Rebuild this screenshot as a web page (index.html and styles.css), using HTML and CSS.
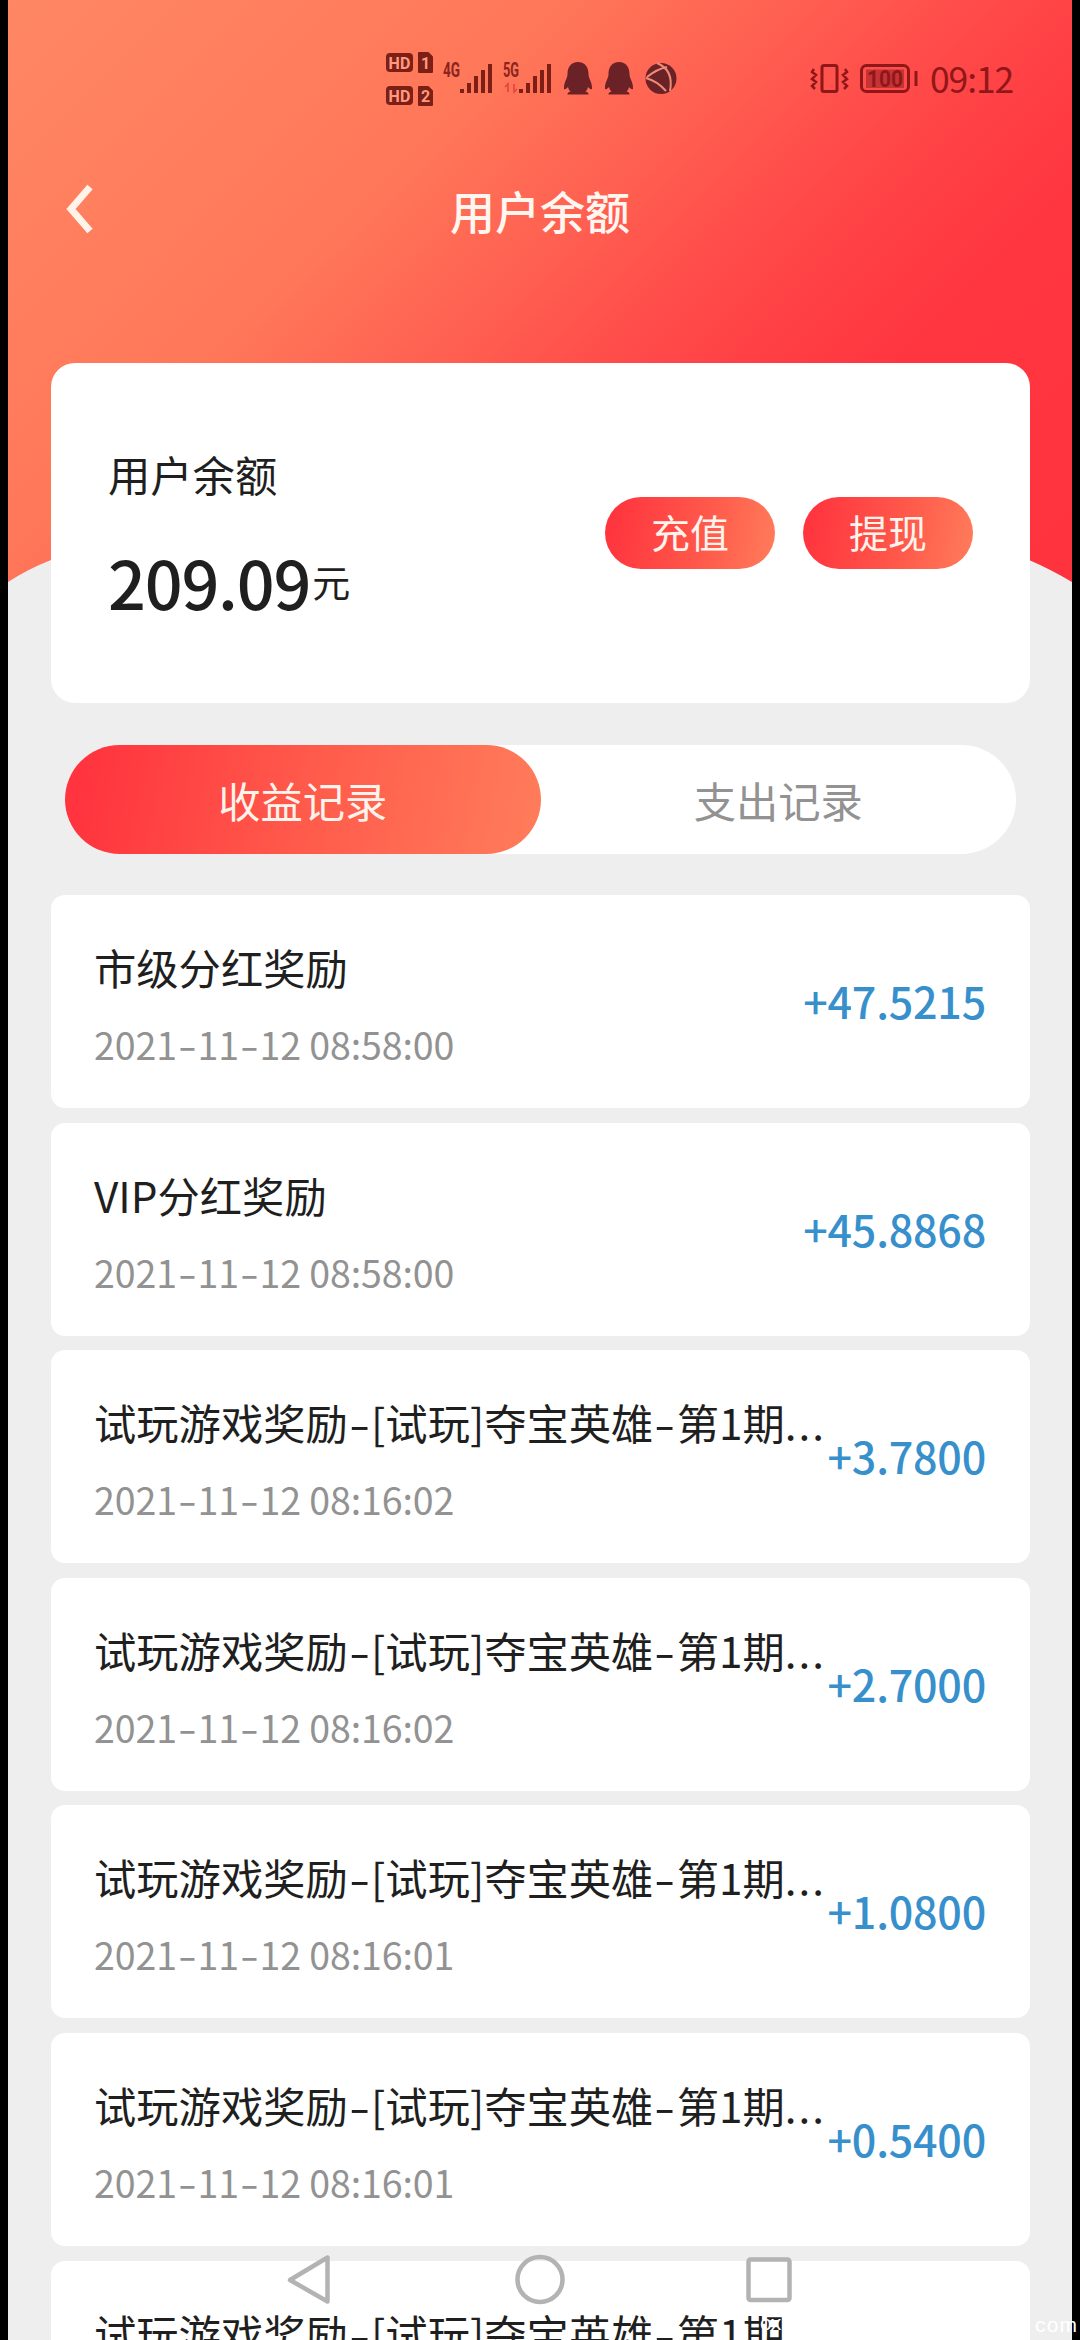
FILE: index.html
```html
<!DOCTYPE html>
<html lang="zh-CN">
<head>
<meta charset="utf-8">
<title>用户余额</title>
<link rel="stylesheet" href="styles.css">
</head>
<body>
<div class="screen">
  <div class="header-bg"></div>
  <header class="status">
    <svg class="status-icons" width="310" height="64" viewBox="380 46 310 64">
      <g fill="#7c1f17">
        <rect x="386" y="53" width="27" height="19" rx="4"/><path d="M419 53h9l4 4v15h-13z" stroke="#7c1f17" stroke-width="2" stroke-linejoin="round"/>
        <rect x="386" y="86" width="27" height="19" rx="4"/><path d="M419 87h9l4 4v14h-13z" stroke="#7c1f17" stroke-width="2" stroke-linejoin="round"/>
        <path d="M460 89h4v4h-4zM467 83h4v10h-4zM474 76h4v17h-4zM481 70h4v23h-4zM488 64h4v29h-4zM519 89h4v4h-4zM526 83h4v10h-4zM533 76h4v17h-4zM540 70h4v23h-4zM547 64h4v29h-4z"/>
      </g>
      <g class="hd"><text x="388.500" y="68.500" textLength="22">HD</text><text x="421" y="69">1</text><text x="388.500" y="101.500" textLength="22">HD</text><text x="421" y="102">2</text></g>
      <g class="net"><text x="443" y="77" textLength="17" lengthAdjust="spacingAndGlyphs">4G</text><text x="503" y="77" textLength="16" lengthAdjust="spacingAndGlyphs">5G</text></g>
      <path d="M508 92v-8l-3 3M514 84v8l3-3" fill="none" stroke="#e2453c" stroke-width="1.600"/>
      <g id="qq" fill="#6b2226"><path d="M578 62c-7 0-10.500 5-10.500 12 0 5-4 8-3.500 15 1 1 3-1 4-2 .5 2 1 3 2.500 4.500-2 .5-3 1-3 3h21c0-2-1-2.500-3-3 1.500-1.500 2-2.500 2.500-4.500 1 1 3 3 4 2 .5-7-3.500-10-3.500-15 0-7-3.500-12-10.500-12z"/></g>
      <use href="#qq" x="41"/>
      <circle cx="661" cy="78.500" r="15.500" fill="#6b2226"/>
      <path d="M647 77q10-8 20-10M646 78q11 3 20 13M657 63q17 7 13 28" fill="none" stroke="#ef8a78" stroke-width="2"/>
    </svg>
    <svg class="status-right" width="110" height="36" viewBox="809 60 110 36">
      <g fill="none" stroke="#8f1719" stroke-width="3">
        <rect x="822" y="65.500" width="15" height="26" rx="2"/>
        <path d="M814 69l-2 3 4 3-4 4 4 3-4 4 3 3M845 69l2 3-4 3 4 4-4 3 4 4-3 3" stroke-width="2.500"/>
        <rect x="861.500" y="65.500" width="47" height="26" rx="5"/>
        <path d="M916 71v15"/>
      </g>
      <rect x="866" y="69.500" width="38" height="18.500" fill="#c53337"/>
      <text class="bat" x="867" y="87" textLength="36" lengthAdjust="spacingAndGlyphs">100</text>
    </svg>
    <span class="clock">09:12</span>
  </header>
  <div class="navbar">
    <svg class="back" width="32" height="52" viewBox="0 0 32 52"><path d="M26 4L7 26l19 22" fill="none" stroke="#fff3ea" stroke-width="7"/></svg>
    <h1>用户余额</h1>
  </div>
  <section class="balance">
    <div class="info">
      <div class="label">用户余额</div>
      <div class="amount"><b>209.09</b><span>元</span></div>
    </div>
    <div class="buttons"><button>充值</button><button>提现</button></div>
  </section>
  <div class="tabs"><div class="tab active">收益记录</div><div class="tab">支出记录</div></div>
  <main class="list">
    <article><div class="text"><h2>市级分红奖励</h2><time>2021<i>-</i>11<i>-</i>12 08:58:00</time></div><strong>+47.5215</strong></article>
    <article><div class="text"><h2>VIP分红奖励</h2><time>2021<i>-</i>11<i>-</i>12 08:58:00</time></div><strong>+45.8868</strong></article>
    <article><div class="text"><h2>试玩游戏奖励<i>-</i>[试玩]夺宝英雄<i>-</i>第1期<em>...</em></h2><time>2021<i>-</i>11<i>-</i>12 08:16:02</time></div><strong>+3.7800</strong></article>
    <article><div class="text"><h2>试玩游戏奖励<i>-</i>[试玩]夺宝英雄<i>-</i>第1期<em>...</em></h2><time>2021<i>-</i>11<i>-</i>12 08:16:02</time></div><strong>+2.7000</strong></article>
    <article><div class="text"><h2>试玩游戏奖励<i>-</i>[试玩]夺宝英雄<i>-</i>第1期<em>...</em></h2><time>2021<i>-</i>11<i>-</i>12 08:16:01</time></div><strong>+1.0800</strong></article>
    <article><div class="text"><h2>试玩游戏奖励<i>-</i>[试玩]夺宝英雄<i>-</i>第1期<em>...</em></h2><time>2021<i>-</i>11<i>-</i>12 08:16:01</time></div><strong>+0.5400</strong></article>
    <article><div class="text"><h2>试玩游戏奖励<i>-</i>[试玩]夺宝英雄<i>-</i>第1期</h2></div></article>
  </main>
  <nav class="sysnav">
    <svg width="520" height="60" viewBox="280 2250 520 60" fill="none" stroke="#b3b3b3" stroke-width="4.500" stroke-linejoin="round">
      <path d="M327.500 2257.500v44L290 2280z"/><circle cx="540" cy="2279.500" r="22.500"/><rect x="748.500" y="2259.500" width="41" height="40.500" rx="2"/>
    </svg>
  </nav>
  <span class="mark mark-start">ox</span>
  <span class="mark">com</span>
</div>
</body>
</html>
```
FILE: styles.css
```css
* { box-sizing: border-box; margin: 0; padding: 0; }
body {
  width: 1080px; height: 2340px; overflow: hidden; background: #000;
  font-family: "Noto Sans CJK SC", sans-serif; color: #1f1f1f;
}
.screen { position: relative; width: 1064px; height: 2340px; margin: 0 8px; background: #eeeeef; }
.header-bg {
  position: absolute; inset: 0 0 auto 0; height: 583px;
  background: linear-gradient(135deg, #ff8764 0%, #ff7759 34%, #ff6051 48%, #ff4f4b 57%, #ff4044 67%, #ff353f 77%, #ff333e 100%);
  clip-path: path("M0 0H1064V582Q1042 569 1021 560H43Q20 569 0 582Z");
}
.status { position: relative; display: flex; height: 156px; padding: 46px 0 0 372px; }
.status-right { margin: 14px 0 0 119px; flex: none; }
.status-icons { flex: none; }
.hd text { font: bold 16px Roboto, sans-serif; fill: #ff9a80; }
.net text { font: bold 20px Roboto, sans-serif; fill: #8a241c; }
.bat { font: bold 24px Roboto, sans-serif; fill: #8f1719; }
.clock { margin-left: 11px; font-size: 35.500px; line-height: 64px; letter-spacing: -1.100px; color: #8f1719; white-space: nowrap; }
.navbar { position: relative; display: flex; align-items: center; justify-content: center; height: 110px; }
.navbar h1 { font-size: 45px; font-weight: 500; line-height: 60px; color: #fff6ef; }
.back { position: absolute; left: 56px; top: 27px; }
.balance {
  position: relative; display: flex; justify-content: space-between; align-items: center;
  height: 340px; margin: 97px 42px 0 43px; padding: 0 57px; border-radius: 24px; background: #fff;
}
.info { padding-top: 5px; }
.label { font-size: 42.300px; line-height: 60px; }
.amount { display: flex; align-items: center; height: 94px; margin-top: 30px; line-height: 94px; }
.amount b { font-size: 66.500px; font-weight: 500; letter-spacing: -1.200px; }
.amount span { margin-left: 2px; font-size: 38px; }
.buttons { display: flex; gap: 28px; }
.buttons button {
  width: 170px; height: 72px; padding-bottom: 4px; border: 0; border-radius: 36px;
  background: linear-gradient(100deg, #ff343e 5%, #ff5a4b 60%, #ff7d5b);
  font: 39px/62px "Noto Sans CJK SC", sans-serif; color: #fff3ec;
}
.tabs { position: relative; display: flex; height: 109px; margin: 42px 56px 0 57px; border-radius: 55px; background: #fff; }
.tab { flex: 1; text-align: center; font-size: 42.300px; line-height: 109px; color: #929292; }
.tab.active {
  border-radius: 55px; color: #fff3ec;
  background: linear-gradient(100deg, #ff343e 5%, #ff5a4b 50%, #ff7d5b);
}
.list { position: relative; height: 1445px; overflow: hidden; margin: 41px 42px 0 43px; display: flex; flex-direction: column; gap: 14.600px; }
.list article {
  flex: none; display: flex; justify-content: space-between; height: 213px; padding: 41px 44px 0 43px;
  border-radius: 14px; background: #fff;
}
.text { white-space: nowrap; }
.list h2 { font-size: 42.300px; font-weight: 400; line-height: 62px; }
.list time { display: block; margin-top: 18px; font-size: 37.500px; line-height: 56px; letter-spacing: -.1px; color: #929292; }
.list i { display: inline-block; width: .55em; font-style: normal; text-align: center; transform: scaleX(1.45); }
.list em { font-style: normal; letter-spacing: 2px; }
.list strong { font-size: 43px; font-weight: 500; line-height: 64px; margin-top: 32px; letter-spacing: -.2px; color: #3790cc; }
.sysnav { position: absolute; left: 272px; top: 2250px; height: 60px; }
.mark { position: absolute; left: 1027px; top: 2313px; font: 21px/24px "Liberation Sans", sans-serif; letter-spacing: 1.200px; color: #fff; }
.mark-start { left: 752px; letter-spacing: -1px; top: 2311px; }
```
